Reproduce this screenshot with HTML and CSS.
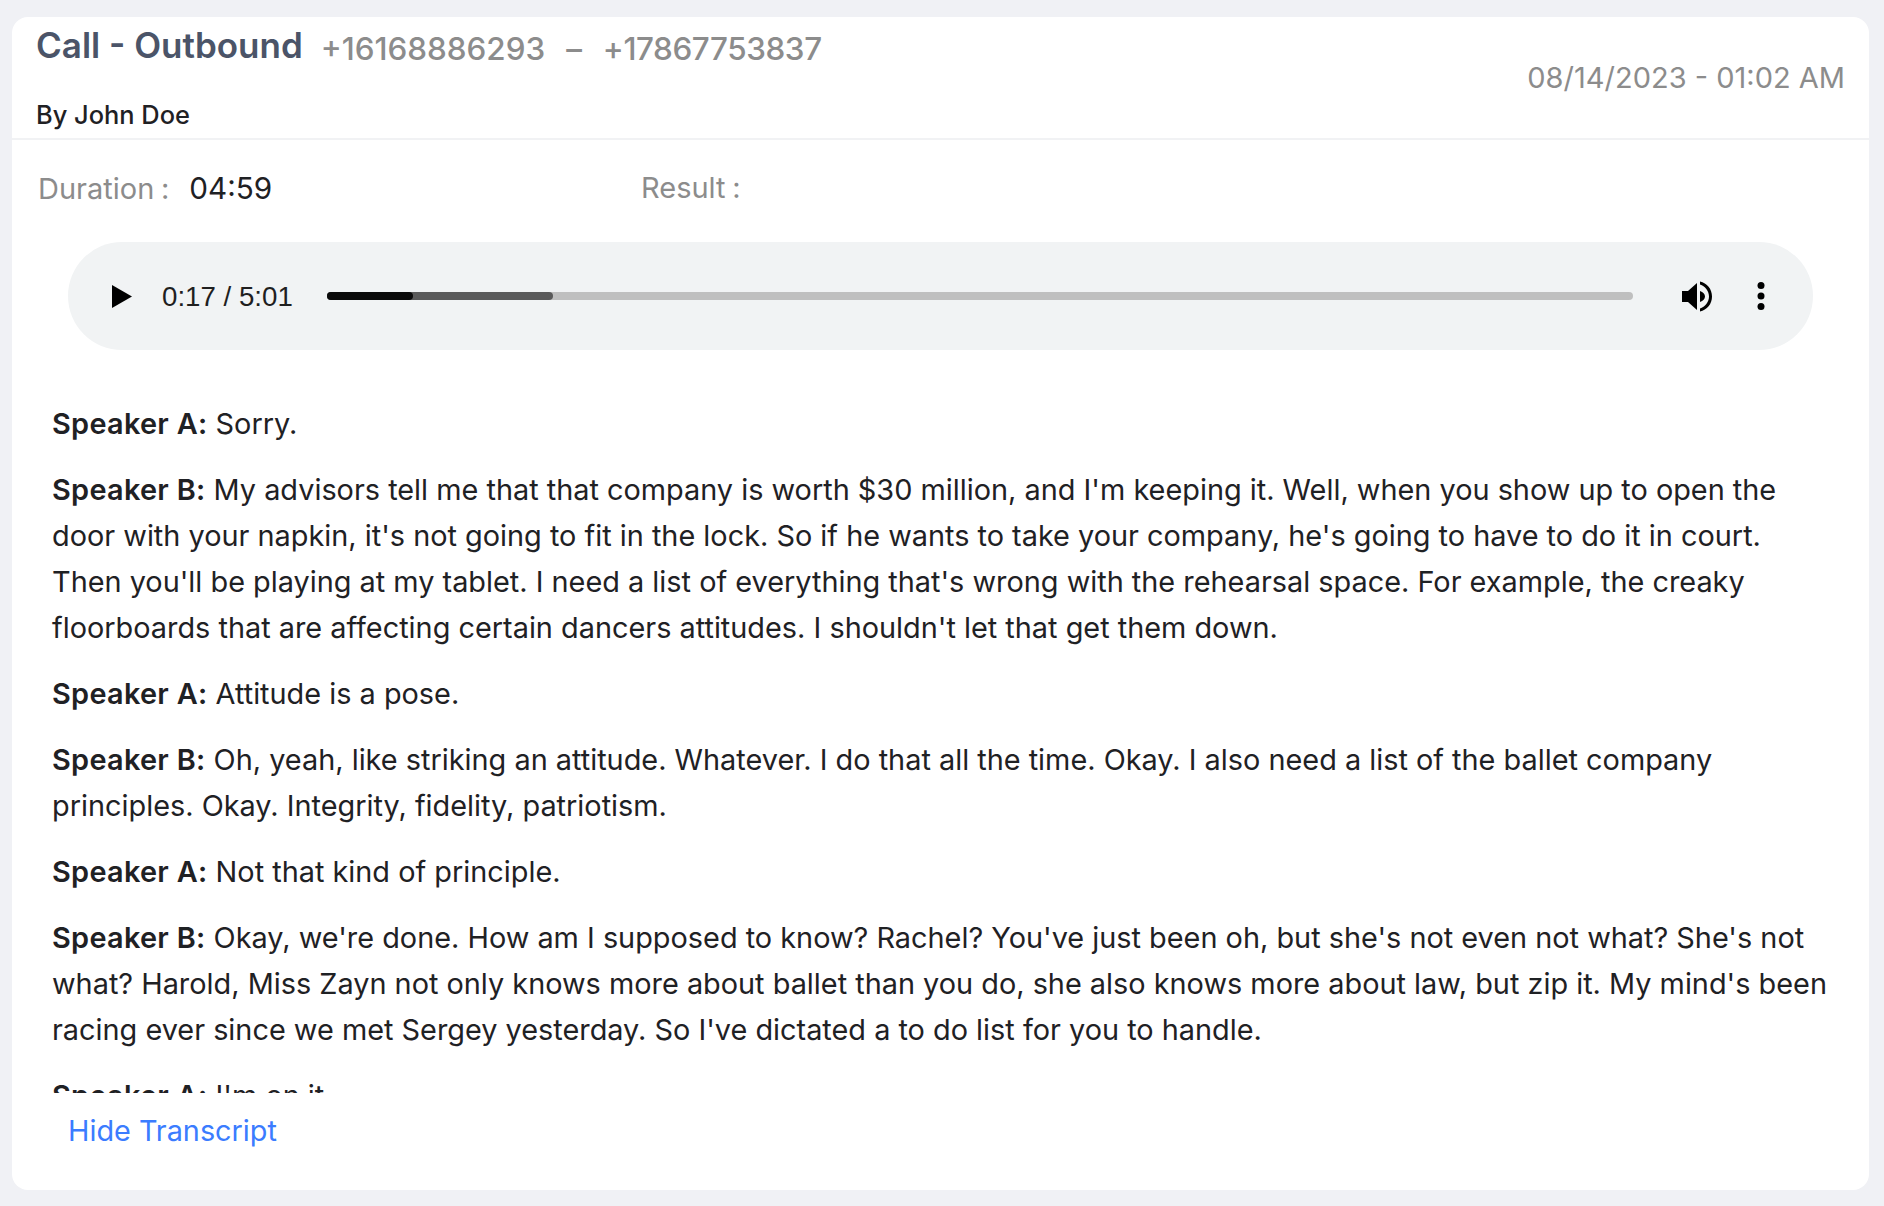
FILE: index.html
```html
<!DOCTYPE html>
<html lang="en">
<head>
<meta charset="utf-8">
<title>Call - Outbound</title>
<link rel="stylesheet" href="styles.css">
</head>
<body>
<main class="card">
  <header class="head">
    <div class="head-left">
      <div class="title-row">
        <h1 class="title">Call - Outbound</h1>
        <span class="numbers">+16168886293<span class="dash">–</span><span class="to">+17867753837</span></span>
      </div>
      <div class="by">By John Doe</div>
    </div>
    <div class="date">08/14/2023 - 01:02 AM</div>
  </header>
  <div class="meta">
    <div class="meta-duration"><span class="label">Duration :</span><span class="value">04:59</span></div>
    <div class="meta-result"><span class="label">Result :</span></div>
  </div>
  <div class="player">
    <svg class="play" viewBox="0 0 20 23" width="20" height="23"><path d="M0 0L20 11.500L0 23Z"/></svg>
    <span class="time">0:17 / 5:01</span>
    <div class="track">
      <div class="buffered"></div>
      <div class="played"></div>
    </div>
    <svg class="volume" viewBox="0 0 30 31" width="30" height="31"><path d="M0 10H6L15 2V29L6 21H0Z"/><path d="M18 10C21 11 23 13 23 15.500C23 18 21 20 18 21Z"/><path d="M18 0.500C25 2 30 8 30 15.500C30 23 25 29 18 30.500V27.500C23 26 27 21 27 15.500C27 10 23 5 18 3.500Z"/></svg>
    <svg class="more" viewBox="0 0 8 28" width="8" height="28"><circle cx="4" cy="3.500" r="3.500"/><circle cx="4" cy="14" r="3.500"/><circle cx="4" cy="24.500" r="3.500"/></svg>
  </div>
  <div class="transcript">
    <p><b>Speaker A:</b> Sorry.</p>
    <p><b>Speaker B:</b> My advisors tell me that that company is worth $30 million, and I'm keeping it. Well, when you show up to open the door with your napkin, it's not going to fit in the lock. So if he wants to take your company, he's going to have to do it in court. Then you'll be playing at my tablet. I need a list of everything that's wrong with the rehearsal space. For example, the creaky floorboards that are affecting certain dancers attitudes. I shouldn't let that get them down.</p>
    <p><b>Speaker A:</b> Attitude is a pose.</p>
    <p><b>Speaker B:</b> Oh, yeah, like striking an attitude. Whatever. I do that all the time. Okay. I also need a list of the ballet company principles. Okay. Integrity, fidelity, patriotism.</p>
    <p><b>Speaker A:</b> Not that kind of principle.</p>
    <p><b>Speaker B:</b> Okay, we're done. How am I supposed to know? Rachel? You've just been oh, but she's not even not what? She's not what? Harold, Miss Zayn not only knows more about ballet than you do, she also knows more about law, but zip it. My mind's been racing ever since we met Sergey yesterday. So I've dictated a to do list for you to handle.</p>
    <p><b>Speaker A:</b> I'm on it.</p>
  </div>
  <a class="toggle" href="#">Hide Transcript</a>
</main>
</body>
</html>
```
FILE: styles.css
```css
* { box-sizing: border-box; }
html, body { margin: 0; height: 100%; }
body {
  background: #f0f1f5;
  padding: 17px 15px 16px 12px;
  font-family: Inter, "Liberation Sans", sans-serif;
  color: #1f2124;
}
.card {
  height: 1173px;
  background: #fff;
  border-radius: 16px;
  display: flex;
  flex-direction: column;
}
.head {
  height: 123px;
  flex: none;
  border-bottom: 2px solid #f1f2f4;
  padding: 0 24px;
  display: flex;
  justify-content: space-between;
}
.title-row {
  display: flex;
  align-items: baseline;
  gap: 18px;
  padding-top: 5px;
}
.title {
  margin: 0;
  font-size: 35px;
  line-height: 46px;
  font-weight: 600;
  color: #4b5468;
}
.numbers {
  position: relative;
  top: 2px;
  font-size: 31.400px;
  font-weight: 500;
  color: #8c8c8c;
}
.dash { margin: 0 21px; }
.to { letter-spacing: -0.4px; }
.by {
  margin-top: 31px;
  font-size: 25.400px;
  line-height: 32px;
  font-weight: 500;
  color: #1f2124;
}
.date {
  margin-top: 43px;
  font-size: 29px;
  line-height: 36px;
  color: #8c8c8c;
}
.meta {
  flex: none;
  display: flex;
  height: 102px;
  padding: 28px 0 0 26px;
  font-size: 29px;
  line-height: 40px;
}
.meta-duration { width: 603px; }
.label { color: #8c8c8c; word-spacing: -1.500px; }
.value { margin-left: 20px; font-size: 29.700px; color: #1f2124; }
.player {
  flex: none;
  height: 108px;
  margin: 0 56px 0 56px;
  background: #f1f3f4;
  border-radius: 54px;
  display: flex;
  align-items: center;
  padding-left: 44px;
}
.play { fill: #000; flex: none; }
.time {
  margin-left: 30px;
  padding-top: 2px;
  width: 165px;
  flex: none;
  font-family: "Liberation Sans", Arial, sans-serif;
  font-size: 27.700px;
  color: #1f1f1f;
}
.track {
  position: relative;
  width: 1306px;
  height: 8px;
  flex: none;
  border-radius: 4px;
  background: #bfbfbf;
}
.buffered, .played {
  position: absolute;
  left: 0;
  top: 0;
  height: 100%;
  border-radius: 4px;
}
.buffered { width: 226px; background: #5a5a5a; }
.played { width: 86px; background: #0a0a0a; }
.volume { margin-left: 49px; flex: none; fill: #000; }
.more { margin-left: 45px; flex: none; fill: #000; }
.transcript {
  flex: 1 1 0;
  min-height: 0;
  overflow: hidden;
  margin-top: 51px;
  padding: 0 40px;
  font-size: 28.860px;
  line-height: 46px;
}
.transcript p { margin: 0 0 20px; }
.transcript b { font-weight: 600; letter-spacing: 0.3px; }
.toggle {
  flex: none;
  height: 97px;
  padding: 18px 0 0 56px;
  font-size: 28.800px;
  line-height: 40px;
  color: #3b7cff;
  text-decoration: none;
}
```
